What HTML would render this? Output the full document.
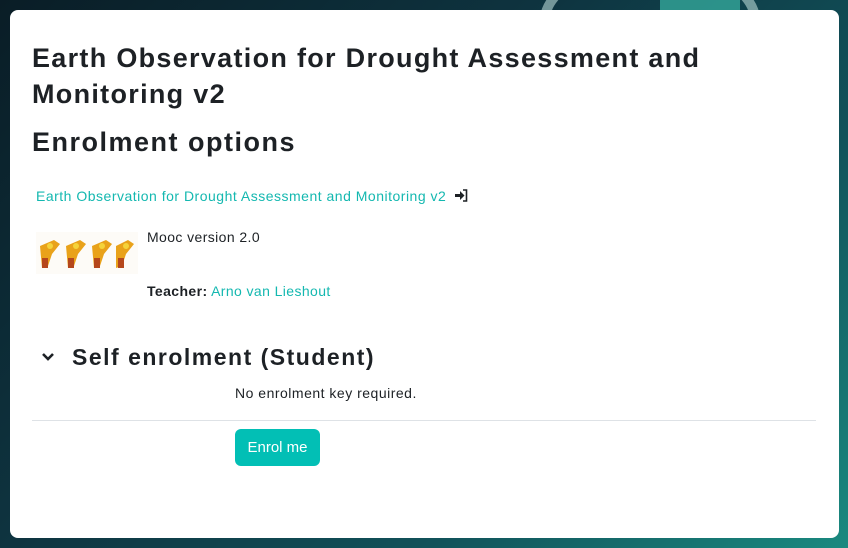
<!DOCTYPE html>
<html><head><meta charset="utf-8"><style>
*{margin:0;padding:0;box-sizing:border-box}
body{width:848px;height:548px;overflow:hidden;font-family:"Liberation Sans",sans-serif;color:#1d2125;
background:linear-gradient(135deg,#0a1d26 0%,#0e3440 40%,#11525a 70%,#1a8a80 100%);position:relative}
.card{position:absolute;left:10px;top:10px;width:829px;height:528px;background:#fff;border-radius:8px}
.a{position:absolute;white-space:nowrap}
h1{font-size:27px;font-weight:bold;line-height:37px;letter-spacing:1.3px}
a{color:#14b8b0;text-decoration:none}
</style></head><body>
<div style="position:absolute;left:540px;top:-40px;width:220px;height:120px;border:10px solid #b9d9d6;border-radius:50%;opacity:.6"></div>
<div style="position:absolute;left:660px;top:0;width:80px;height:12px;background:#39b5a5;opacity:.7"></div>
<div class="card">
<h1 class="a" style="left:22px;top:30px">Earth Observation for Drought Assessment and</h1>
<h1 class="a" style="left:22px;top:66px">Monitoring v2</h1>
<h1 class="a" style="left:22px;top:114px;letter-spacing:1.5px">Enrolment options</h1>
<div class="a" style="left:26px;top:178px;font-size:14px;letter-spacing:0.5px"><a>Earth Observation for Drought Assessment and Monitoring v2</a>
<svg width="14" height="13" viewBox="0 0 14 13" style="vertical-align:-1px;margin-left:3px"><path d="M1 5h5V2l4.5 4.5L6 11V8H1z" fill="#1d2125"/><path d="M9 1h3.5v11H9" fill="none" stroke="#1d2125" stroke-width="1.6"/></svg></div>
<div class="a" style="left:26px;top:222px;width:102px;height:42px">
<svg width="102" height="42"><rect width="102" height="42" fill="#fdfbf7"/>
<g fill="#e9a21a"><path d="M4 14l14-6 6 4-8 10-4 12-6 2z"/><path d="M30 14l14-6 6 4-8 10-4 12-6 2z"/><path d="M56 14l14-6 6 4-8 10-4 12-6 2z"/><path d="M80 14l12-6 6 4-8 10-4 12-6 2z"/></g>
<g fill="#b5471c"><rect x="6" y="26" width="6" height="10"/><rect x="32" y="26" width="6" height="10"/><rect x="58" y="26" width="6" height="10"/><rect x="82" y="26" width="6" height="10"/></g>
<g fill="#f5d33a"><circle cx="14" cy="14" r="3"/><circle cx="40" cy="14" r="3"/><circle cx="66" cy="14" r="3"/><circle cx="90" cy="14" r="3"/></g></svg></div>
<div class="a" style="left:137px;top:219px;font-size:14px;letter-spacing:0.4px">Mooc version 2.0</div>
<div class="a" style="left:137px;top:273px;font-size:14px;letter-spacing:0.4px"><b>Teacher:</b> <a>Arno van Lieshout</a></div>
<svg class="a" style="left:31px;top:342px" width="14" height="10" viewBox="0 0 14 10"><path d="M2 2l5 5 5-5" fill="none" stroke="#1d2125" stroke-width="2.6"/></svg>
<div class="a" style="left:62px;top:331px;font-size:23px;font-weight:bold;line-height:32px;letter-spacing:1.5px">Self enrolment (Student)</div>
<div class="a" style="left:225px;top:375px;font-size:14px;letter-spacing:0.5px">No enrolment key required.</div>
<div class="a" style="left:22px;top:410px;width:784px;height:1px;background:#dee2e6"></div>
<div class="a" style="left:225px;top:419px;width:85px;height:37px;background:#02bfb5;border-radius:6px;color:#fff;font-size:15px;text-align:center;line-height:37px">Enrol me</div>
</div>
</body></html>
